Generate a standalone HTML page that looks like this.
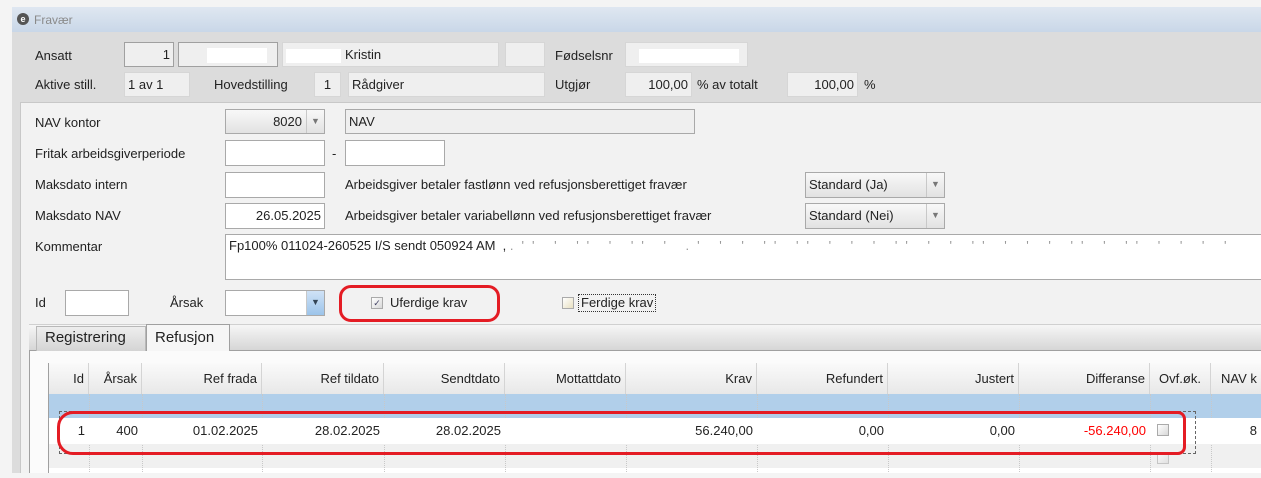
<!DOCTYPE html>
<html><head><meta charset="utf-8"><style>
*{margin:0;padding:0;box-sizing:border-box}
body{width:1261px;height:478px;overflow:hidden;background:#f4f4f4;font-family:"Liberation Sans",Tahoma,sans-serif;font-size:13px;color:#222;position:relative}
.a{position:absolute}
.t{position:absolute;white-space:nowrap;line-height:16px}
.hb{position:absolute;background:#efefef;border:1px solid #d6d6d6;line-height:23px;padding:0 3px;white-space:nowrap}
.wb{position:absolute;background:#fff;border:1px solid #a9a9a9;line-height:23px;padding:0 3px;white-space:nowrap}
.cb{position:absolute;border:1px solid #a9a9a9;background:linear-gradient(#f8f8f8,#e2e2e2);line-height:23px;white-space:nowrap}
.arr{position:absolute;right:0;top:0;bottom:0;width:18px;border-left:1px solid #c8c8c8;color:#777;font-size:9px;text-align:center;line-height:23px}
.gh{position:absolute;top:363px;height:31px;border-right:1px solid #d4d4d4;background:linear-gradient(#fafafa,#e8e8e8);text-align:right;padding-right:4px;line-height:31px;font-size:13px}
.gd{position:absolute;top:418px;height:26px;text-align:right;padding-right:4px;line-height:26px}
.vl{position:absolute;top:394px;height:80px;border-left:1px dotted #c8c8c8}
.chk{position:absolute;width:12px;height:12px;border:1px solid #aaa;background:linear-gradient(135deg,#fff,#d8d8d8)}
</style></head><body>
<!-- title bar -->
<div class="a" style="left:12px;top:7px;width:1249px;height:25px;background:linear-gradient(#dfe7f1,#c9d7e8)"></div>
<div class="a" style="left:17px;top:13px;width:12px;height:12px;border-radius:6px;background:#555;color:#fff;font-size:9px;line-height:12px;text-align:center;font-weight:bold">e</div>
<div class="t" style="left:34px;top:12px;color:#8a8a8a;font-size:12px">Fravær</div>
<!-- header area -->
<div class="a" style="left:12px;top:32px;width:1249px;height:446px;background:#dcdcdc"></div>
<div class="t" style="left:35px;top:48px">Ansatt</div>
<div class="hb" style="left:124px;top:42px;width:50px;height:25px;text-align:right;border-color:#a0a0a0">1</div>
<div class="hb" style="left:178px;top:42px;width:100px;height:25px;border-color:#a0a0a0"><span style="display:inline-block;width:60px;height:15px;background:#fff;vertical-align:middle;margin-left:25px"></span></div>
<div class="hb" style="left:282px;top:42px;width:217px;height:25px"><span style="display:inline-block;width:55px;height:14px;background:#fff;vertical-align:middle;margin-right:4px"></span>Kristin</div>
<div class="hb" style="left:505px;top:42px;width:40px;height:25px"></div>
<div class="t" style="left:555px;top:48px">Fødselsnr</div>
<div class="hb" style="left:625px;top:42px;width:123px;height:25px"><span style="display:inline-block;width:100px;height:14px;background:#fff;vertical-align:middle;margin-left:10px"></span></div>
<div class="t" style="left:35px;top:77px">Aktive still.</div>
<div class="hb" style="left:124px;top:72px;width:66px;height:25px">1 av 1</div>
<div class="t" style="left:214px;top:77px">Hovedstilling</div>
<div class="hb" style="left:314px;top:72px;width:27px;height:25px;text-align:center">1</div>
<div class="hb" style="left:348px;top:72px;width:197px;height:25px">Rådgiver</div>
<div class="t" style="left:555px;top:77px">Utgjør</div>
<div class="hb" style="left:625px;top:72px;width:67px;height:25px;text-align:right">100,00</div>
<div class="t" style="left:697px;top:77px">% av totalt</div>
<div class="hb" style="left:787px;top:72px;width:71px;height:25px;text-align:right">100,00</div>
<div class="t" style="left:864px;top:77px">%</div>
<!-- main panel -->
<div class="a" style="left:20px;top:102px;width:1241px;height:376px;background:#f2f2f2;border-top:1px solid #c8c8c8;border-left:1px solid #c8c8c8"></div>
<div class="t" style="left:35px;top:115px">NAV kontor</div>
<div class="cb" style="left:225px;top:109px;width:100px;height:25px;text-align:right;padding-right:22px">8020<div class="arr">&#9660;</div></div>
<div class="hb" style="left:345px;top:109px;width:350px;height:25px;border-color:#a9a9a9">NAV</div>
<div class="t" style="left:35px;top:146px">Fritak arbeidsgiverperiode</div>
<div class="wb" style="left:225px;top:140px;width:100px;height:26px"></div>
<div class="t" style="left:332px;top:146px">-</div>
<div class="wb" style="left:345px;top:140px;width:100px;height:26px"></div>
<div class="t" style="left:35px;top:177px">Maksdato intern</div>
<div class="wb" style="left:225px;top:172px;width:100px;height:26px"></div>
<div class="t" style="left:345px;top:177px">Arbeidsgiver betaler fastlønn ved refusjonsberettiget fravær</div>
<div class="cb" style="left:805px;top:172px;width:140px;height:26px;padding-left:3px">Standard (Ja)<div class="arr">&#9660;</div></div>
<div class="t" style="left:35px;top:208px">Maksdato NAV</div>
<div class="wb" style="left:225px;top:203px;width:100px;height:26px;text-align:right">26.05.2025</div>
<div class="t" style="left:345px;top:208px">Arbeidsgiver betaler variabellønn ved refusjonsberettiget fravær</div>
<div class="cb" style="left:805px;top:203px;width:140px;height:26px;padding-left:3px">Standard (Nei)<div class="arr">&#9660;</div></div>
<div class="t" style="left:35px;top:239px">Kommentar</div>
<div class="wb" style="left:225px;top:234px;width:1040px;height:46px;line-height:20px;padding-top:1px">Fp100% 011024-260525 I/S sendt 050924 AM &nbsp;, <span style="color:#999;letter-spacing:8px">.'' ' '' ' '' ' .' ' ' '' '' ' ' ' '' ' ' '' ' ' ' '' ' '' ' ' ' '</span></div>
<div class="t" style="left:35px;top:295px">Id</div>
<div class="wb" style="left:65px;top:290px;width:64px;height:26px"></div>
<div class="t" style="left:170px;top:295px">Årsak</div>
<div class="wb" style="left:225px;top:290px;width:100px;height:26px"><div class="arr" style="background:linear-gradient(#cfe2f6,#9cc4ea);color:#345">&#9660;</div></div>
<div class="a" style="left:339px;top:285px;width:161px;height:37px;border:3px solid #e41c24;border-radius:12px"></div>
<div class="chk" style="left:371px;top:297px;font-size:9px;line-height:10px;text-align:center;color:#446">&#10003;</div>
<div class="t" style="left:390px;top:295px">Uferdige krav</div>
<div class="chk" style="left:562px;top:297px;background:linear-gradient(135deg,#fff,#e8e0c0)"></div>
<div class="t" style="left:578px;top:294px;border:1px dotted #333;padding:0 2px;line-height:16px">Ferdige krav</div>
<!-- tabs -->
<div class="a" style="left:29px;top:324px;width:1232px;height:27px;background:linear-gradient(#f6f6f6,#d6d6d6);border-bottom:1px solid #a0a0a0;border-top:1px solid #d0d0d0"></div>
<div class="a" style="left:36px;top:326px;width:110px;height:25px;border:1px solid #b8b8b8;border-bottom:none;background:linear-gradient(#eee,#d4d4d4);font-size:15px;line-height:22px;padding-left:8px">Registrering</div>
<div class="a" style="left:146px;top:324px;width:84px;height:28px;border:1px solid #a0a0a0;border-bottom:none;background:#f6f6f6;font-size:15px;line-height:26px;padding-left:8px">Refusjon</div>
<div class="a" style="left:29px;top:351px;width:1232px;height:127px;background:#fbfbfb;border-left:1px solid #a0a0a0"></div>
<!-- grid -->
<div class="a" style="left:48px;top:363px;width:1213px;height:115px;background:#fff;border-left:1px solid #a0a0a0;border-top:1px solid #a0a0a0"></div>
<div class="a" style="left:49px;top:394px;width:1212px;height:24px;background:#b1cfea"></div>
<div class="a" style="left:49px;top:444px;width:1212px;height:24px;background:#f0f0f0"></div>
<div class="gh" style="left:49px;width:40px">Id</div>
<div class="gh" style="left:89px;width:53px">Årsak</div>
<div class="gh" style="left:142px;width:120px">Ref frada</div>
<div class="gh" style="left:262px;width:122px">Ref tildato</div>
<div class="gh" style="left:384px;width:121px">Sendtdato</div>
<div class="gh" style="left:505px;width:121px">Mottattdato</div>
<div class="gh" style="left:626px;width:131px">Krav</div>
<div class="gh" style="left:757px;width:131px">Refundert</div>
<div class="gh" style="left:888px;width:131px">Justert</div>
<div class="gh" style="left:1019px;width:131px">Differanse</div>
<div class="gh" style="left:1150px;width:61px;text-align:center;padding:0">Ovf.øk.</div>
<div class="gh" style="left:1211px;width:60px;text-align:left;padding-left:10px">NAV k</div>
<div class="vl" style="left:89px"></div><div class="vl" style="left:142px"></div><div class="vl" style="left:262px"></div><div class="vl" style="left:384px"></div><div class="vl" style="left:505px"></div><div class="vl" style="left:626px"></div><div class="vl" style="left:757px"></div><div class="vl" style="left:888px"></div><div class="vl" style="left:1019px"></div><div class="vl" style="left:1150px"></div><div class="vl" style="left:1211px"></div>
<div class="a" style="left:49px;top:418px;width:1212px;height:26px;background:#fff"></div>
<div class="gd" style="left:49px;width:40px">1</div>
<div class="gd" style="left:89px;width:53px">400</div>
<div class="gd" style="left:142px;width:120px">01.02.2025</div>
<div class="gd" style="left:262px;width:122px">28.02.2025</div>
<div class="gd" style="left:384px;width:121px">28.02.2025</div>
<div class="gd" style="left:626px;width:131px">56.240,00</div>
<div class="gd" style="left:757px;width:131px">0,00</div>
<div class="gd" style="left:888px;width:131px">0,00</div>
<div class="gd" style="left:1019px;width:131px;color:#f00">-56.240,00</div>
<div class="gd" style="left:1211px;width:50px">8</div>
<div class="chk" style="left:1157px;top:424px"></div>
<div class="chk" style="left:1157px;top:452px;opacity:.6"></div>
<div class="a" style="left:59px;top:411px;width:1137px;height:43px;border:1px dashed #666"></div>
<div class="a" style="left:57px;top:411px;width:1129px;height:44px;border:3px solid #e41c24;border-radius:16px 8px 8px 16px"></div>
<div class="a" style="left:0;top:473px;width:1261px;height:5px;background:#f4f4f4"></div>
</body></html>
